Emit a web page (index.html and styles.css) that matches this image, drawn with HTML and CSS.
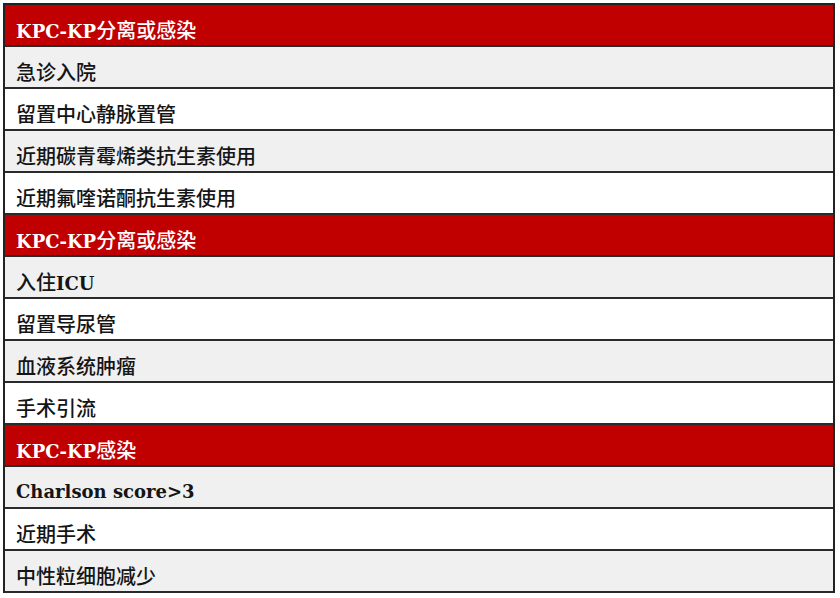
FILE: index.html
```html
<!DOCTYPE html>
<html lang="zh-CN">
<head>
<meta charset="utf-8">
<title>KPC-KP</title>
<link rel="stylesheet" href="styles.css">
</head>
<body>
<div class="table">
  <div class="row head"><span class="lat">KPC-KP</span>分离或感染</div>
  <div class="row odd">急诊入院</div>
  <div class="row even">留置中心静脉置管</div>
  <div class="row odd">近期碳青霉烯类抗生素使用</div>
  <div class="row even">近期氟喹诺酮抗生素使用</div>
  <div class="row head"><span class="lat">KPC-KP</span>分离或感染</div>
  <div class="row odd">入住<span class="lat">ICU</span></div>
  <div class="row even">留置导尿管</div>
  <div class="row odd">血液系统肿瘤</div>
  <div class="row even">手术引流</div>
  <div class="row head"><span class="lat">KPC-KP</span>感染</div>
  <div class="row odd"><span class="lat">Charlson score&gt;3</span></div>
  <div class="row even">近期手术</div>
  <div class="row odd">中性粒细胞减少</div>
</div>
</body>
</html>
```

FILE: styles.css
```css
html, body {
  margin: 0;
  padding: 0;
  background: #ffffff;
}
body {
  padding: 3px 0 0 3px;
  font-family: "Noto Sans CJK SC", "Noto Sans", sans-serif;
}
.table {
  width: 828px;
  border: 2px solid #222;
  border-bottom: none;
  display: flex;
  flex-direction: column;
}
.row {
  box-sizing: content-box;
  height: 27px;
  padding: 13px 0 0 11px;
  border-bottom: 2px solid #2a2a2a;
  display: flex;
  align-items: baseline;
  font-size: 20px;
  line-height: 24px;
  color: #151515;
  font-weight: 500;
}
.head {
  background: #c00000;
  color: #ffffff;
}
.odd {
  background: #f0f0f0;
}
.even {
  background: #ffffff;
}
.lat {
  font-family: "DejaVu Serif", "Liberation Serif", serif;
  font-weight: bold;
  font-size: 18px;
  white-space: pre;
}
```
